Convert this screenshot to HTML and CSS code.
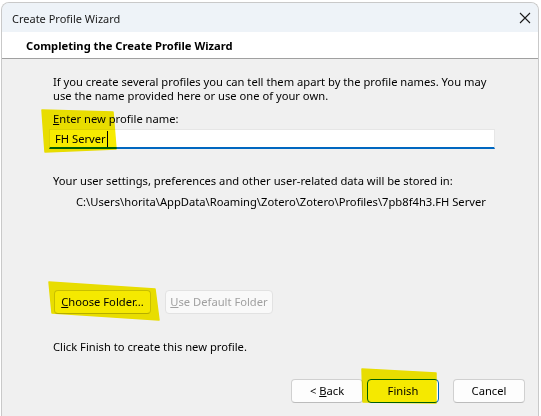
FILE: index.html
```html
<!DOCTYPE html>
<html>
<head>
<meta charset="utf-8">
<link rel="stylesheet" href="styles.css">
</head>
<body>
<div class="window">
  <div class="titlebar">
    <span class="title">Create Profile Wizard</span>
    <svg class="close" width="12" height="12" viewBox="0 0 12 12"><path d="M1 1 L11 11 M11 1 L1 11" stroke="#1a1a1a" stroke-width="1.1" fill="none"/></svg>
  </div>
  <div class="header">Completing the Create Profile Wizard</div>
  <div class="content">
    <p class="intro">If you create several profiles you can tell them apart by the profile names. You may use the name provided here or use one of your own.</p>
    <div class="label"><u>E</u>nter new profile name:</div>
    <div class="input"><span class="value">FH Server</span><span class="caret"></span></div>
    <div class="stored">Your user settings, preferences and other user-related data will be stored in:</div>
    <div class="path">C:\Users\horita\AppData\Roaming\Zotero\Zotero\Profiles\7pb8f4h3.FH Server</div>
    <div class="folder-row">
      <div class="btn btn-choose"><span><u>C</u>hoose Folder...</span></div>
      <div class="btn btn-default disabled"><span><u>U</u>se Default Folder</span></div>
    </div>
    <div class="finish-note">Click Finish to create this new profile.</div>
    <div class="nav-row">
      <div class="btn btn-nav"><span>&lt; <u>B</u>ack</span></div>
      <div class="btn btn-nav primary"><span>Finish</span></div>
      <div class="btn btn-nav cancel"><span>Cancel</span></div>
    </div>
  </div>
</div>
<svg class="marker" width="541" height="416" viewBox="0 0 541 416">
  <polygon points="42,110 113,112 116,149 45,152" />
  <polygon points="49,282 155,289 159,320 52,313" />
  <polygon points="362,369 436,373 436,403 363,402" />
</svg>
</body>
</html>
```
FILE: styles.css
```css
html, body {
  margin: 0;
  padding: 0;
  background: #ffffff;
  width: 541px;
  height: 416px;
  overflow: hidden;
}
body {
  font-family: "Noto Sans", "Open Sans", sans-serif;
  font-size: 11.2px;
  color: #000;
  position: relative;
}
.window {
  margin: 2px 0 0 1px;
  width: 538px;
  height: 420px;
  border: 1px solid #c9c9c9;
  border-bottom: none;
  border-radius: 8px 8px 0 0;
  background: #f0f0f0;
  overflow: hidden;
  box-sizing: border-box;
  display: flex;
  flex-direction: column;
}
.titlebar {
  height: 29px;
  background: #eef3f8;
  display: flex;
  align-items: center;
  justify-content: space-between;
  padding: 0 7px 0 10px;
  flex: none;
}
.title {
  font-size: 11px;
  color: #1a1a1a;
  margin-top: 1px;
}
.close {
  display: block;
}
.header {
  height: 26px;
  background: #ffffff;
  border-bottom: 1px solid #a0a0a0;
  font-weight: bold;
  font-size: 11.2px;
  padding-left: 24px;
  line-height: 28px;
  flex: none;
}
.content {
  display: flex;
  flex-direction: column;
  padding: 16px 13px 0 51px;
}
.intro {
  margin: 0;
  line-height: 14px;
  width: 440px;
}
.label {
  margin-top: 9px;
  line-height: 14px;
}
.input {
  margin-top: 3px;
  margin-left: -4px;
  width: 446px;
  height: 20px;
  box-sizing: border-box;
  background: #ffffff;
  border: 1px solid #e6e6e6;
  border-bottom: 2px solid #0067c0;
  display: flex;
  align-items: center;
  padding-left: 5px;
}
.value {
  line-height: 14px;
}
.caret {
  width: 1px;
  height: 16px;
  background: #000;
  margin-left: 1px;
}
.stored {
  margin-top: 25px;
  line-height: 14px;
}
.path {
  margin-top: 7px;
  margin-left: 23px;
  line-height: 14px;
}
.folder-row {
  margin-top: 81px;
  display: flex;
  gap: 14px;
  margin-left: 1px;
}
.btn {
  height: 24px;
  box-sizing: border-box;
  background: #fdfdfd;
  border: 1px solid #d0d0d0;
  border-bottom-color: #bcbcbc;
  border-radius: 4px;
  display: flex;
  align-items: center;
  justify-content: center;
  line-height: 14px;
}
.btn-choose {
  width: 97px;
}
.btn-default {
  width: 108px;
}
.disabled {
  color: #a0a0a0;
  background: #f9f9f9;
  border-color: #e2e2e2;
}
.finish-note {
  margin-top: 26px;
  line-height: 14px;
}
.nav-row {
  margin-top: 25px;
  display: flex;
  justify-content: flex-end;
  gap: 4px;
}
.btn-nav {
  width: 72px;
}
.primary {
  border: 1px solid #0067c0;
}
.cancel {
  margin-left: 10px;
}
.marker {
  position: absolute;
  left: 0;
  top: 0;
  pointer-events: none;
  mix-blend-mode: multiply;
}
.marker polygon {
  fill: #f7eb00;
  stroke: #f7eb00;
  stroke-width: 1.5;
  stroke-linejoin: round;
}
```
